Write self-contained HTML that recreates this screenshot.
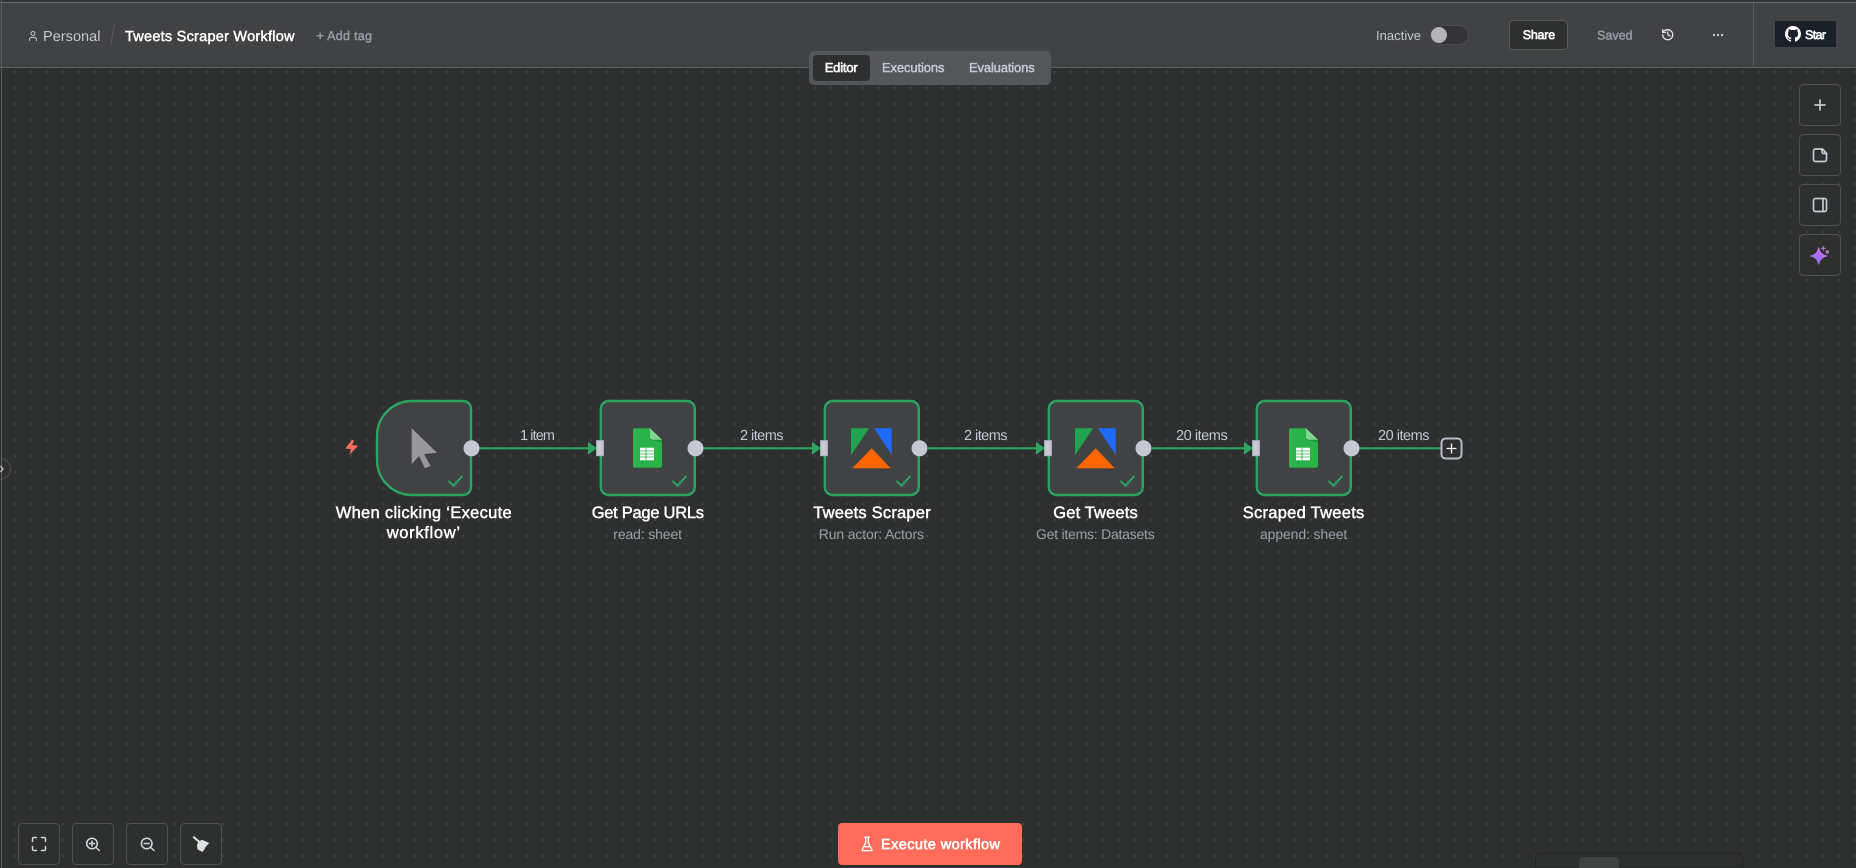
<!DOCTYPE html>
<html><head><meta charset="utf-8"><style>
html,body{margin:0;padding:0;background:#2e2f2f;width:1856px;height:868px;overflow:hidden}
svg{display:block}
text{font-family:"Liberation Sans",sans-serif;text-rendering:geometricPrecision}
.m{stroke-width:.45px}
.s{stroke-width:.6px}
.i{fill:none;stroke-linecap:round;stroke-linejoin:round}
</style></head><body>
<svg width="1856" height="868" viewBox="0 0 1856 868" xmlns="http://www.w3.org/2000/svg">
<defs>
<pattern id="dots" x="0" y="0" width="16" height="16" patternUnits="userSpaceOnUse"><rect x="14.250" y="7.250" width="1.500" height="1.500" fill="#525353"/></pattern>
<linearGradient id="spark" x1="0" y1="1" x2="1" y2="0"><stop offset="0" stop-color="#8a6cff"/><stop offset="1" stop-color="#cf72e8"/></linearGradient>
</defs>
<rect width="1856" height="868" fill="#2e2f2f"/>
<rect width="1856" height="868" fill="url(#dots)"/>

<!-- header -->
<rect x="0" y="0" width="1856" height="68" fill="#414244"/>
<rect x="0" y="0" width="1856" height="2" fill="#333435"/>
<rect x="0" y="2" width="1856" height="1" fill="#6a6b6d"/>
<rect x="0" y="67" width="1856" height="1" fill="#5e5f62"/>
<rect x="1" y="0" width="1" height="868" fill="#5b5c5d"/>
<rect x="1753" y="3" width="1" height="64" fill="#595a5d"/>

<g class="i" stroke="#c5c8d3" stroke-width="2" transform="translate(27,30) scale(.5)"><path d="M19 21v-2a4 4 0 0 0-4-4H9a4 4 0 0 0-4 4v2"/><circle cx="12" cy="7" r="4"/></g>
<text x="43" y="41" font-size="14.500" fill="#c5c8d3" textLength="57.500" lengthAdjust="spacing">Personal</text>
<path d="M114.500 29 L110.500 53" stroke="#58595c" stroke-width="1" fill="none" transform="translate(0,-2) scale(1,.9)"/>
<text x="125" y="41" font-size="14.500" fill="#fff" stroke="#fff" class="m" textLength="169.500" lengthAdjust="spacing">Tweets Scraper Workflow</text>
<text x="316.500" y="40" font-size="12.500" fill="#969aa3" stroke="#969aa3" class="m" textLength="55.500" lengthAdjust="spacing">+ Add tag</text>

<text x="1376" y="40" font-size="13" fill="#c5c8d3" textLength="45" lengthAdjust="spacing">Inactive</text>
<rect x="1430.500" y="25.500" width="38" height="19" rx="9.500" fill="#333435" stroke="#4b4c4e"/>
<circle cx="1439" cy="35" r="8" fill="#b5b5ba"/>
<rect x="1509.500" y="20.500" width="58" height="29" rx="4" fill="#2e2f2f" stroke="#58595b"/>
<text x="1522.700" y="39" font-size="12.500" fill="#fff" stroke="#fff" class="s" textLength="32.500" lengthAdjust="spacing">Share</text>
<text x="1597" y="39.500" font-size="12.500" fill="#969aa3" stroke="#969aa3" class="m" textLength="35.500" lengthAdjust="spacing">Saved</text>
<g class="i" stroke="#e4e5e8" stroke-width="2.300" transform="translate(1661,28) scale(.56)"><path d="M3 12a9 9 0 1 0 9-9 9.750 9.750 0 0 0-6.740 2.740L3 8"/><path d="M3 3v5h5"/><path d="M12 7v5l4 2"/></g>
<g fill="#d4d6dc"><circle cx="1714" cy="35" r="1.100"/><circle cx="1718" cy="35" r="1.100"/><circle cx="1722" cy="35" r="1.100"/></g>
<rect x="1775" y="21" width="61" height="26" rx="1" fill="#1a202a"/>
<path transform="translate(1785,26)" fill="#fff" d="M8 0C3.580 0 0 3.580 0 8c0 3.540 2.290 6.530 5.470 7.590.4.070.55-.17.55-.38 0-.19-.01-.82-.01-1.490-2.010.37-2.530-.49-2.690-.94-.09-.23-.48-.94-.82-1.130-.28-.15-.68-.52-.01-.53.63-.01 1.080.58 1.230.82.720 1.210 1.870.87 2.330.66.070-.52.280-.87.510-1.070-1.780-.2-3.640-.89-3.640-3.950 0-.87.310-1.590.82-2.150-.08-.2-.36-1.020.08-2.120 0 0 .67-.21 2.200.82.640-.18 1.320-.27 2-.27.68 0 1.360.09 2 .27 1.530-1.040 2.200-.82 2.200-.82.44 1.100.16 1.920.08 2.120.51.56.82 1.270.82 2.150 0 3.070-1.870 3.750-3.650 3.950.29.25.54.73.54 1.480 0 1.070-.01 1.930-.01 2.200 0 .21.15.46.55.38A8.013 8.013 0 0016 8c0-4.420-3.580-8-8-8z"/>
<text x="1805" y="39" font-size="12.500" fill="#fff" stroke="#fff" class="s" textLength="21" lengthAdjust="spacing">Star</text>

<!-- tabs -->
<rect x="809" y="51" width="242" height="34" rx="5" fill="#55565a"/>
<rect x="813" y="55" width="57" height="26" rx="4" fill="#2e2f2f"/>
<text x="824.700" y="72" font-size="13" fill="#fff" stroke="#fff" class="s" textLength="33" lengthAdjust="spacing">Editor</text>
<text x="882" y="72" font-size="13" fill="#c5c8d3" stroke="#c5c8d3" class="m" textLength="62.500" lengthAdjust="spacing">Executions</text>
<text x="969" y="72" font-size="13" fill="#c5c8d3" stroke="#c5c8d3" class="m" textLength="65.700" lengthAdjust="spacing">Evaluations</text>

<!-- right toolbar -->
<g fill="#2e2f2f" stroke="#4f5052">
<rect x="1799.500" y="84.500" width="41" height="41" rx="4"/>
<rect x="1799.500" y="134.500" width="41" height="41" rx="4"/>
<rect x="1799.500" y="184.500" width="41" height="41" rx="4"/>
<rect x="1799.500" y="234.500" width="41" height="41" rx="4"/>
</g>
<g class="i" stroke="#c5c8d3" stroke-width="1.700">
<path d="M1820 100v10M1815 105h10"/>
<path d="M1815.500 149h7l4 4.500v6a2 2 0 0 1-2 2h-9a2 2 0 0 1-2-2v-8.500a2 2 0 0 1 2-2z"/>
<path d="M1822 149.500v2.500a1.500 1.500 0 0 0 1.500 1.500h3"/>
<rect x="1813.500" y="198.500" width="13" height="13" rx="2"/>
<path d="M1823 198.500v13"/>
</g>
<path d="M1818.700 248 Q1819.800 254.700 1826.700 256 Q1819.800 257.300 1818.700 264 Q1817.600 257.300 1810.700 256 Q1817.600 254.700 1818.700 248z" fill="url(#spark)" stroke="url(#spark)" stroke-width="1.200" stroke-linejoin="round"/>
<path d="M1823.300 246v4.600M1821 248.300h4.600" stroke="#b77cf0" stroke-width="1.100" fill="none"/>
<circle cx="1827.300" cy="252" r="1.700" fill="#c873b4"/>

<!-- sidebar toggle -->
<circle cx="0" cy="469" r="10.500" fill="#2e2f2f" stroke="#4b4c4d"/>
<rect x="1" y="458" width="1" height="22" fill="#5b5c5d"/>
<path d="M.5 466l2.500 3-2.500 3" stroke="#c5c8d3" stroke-width="1.300" fill="none"/>

<!-- lines -->
<g stroke="#2ba561" stroke-width="2.200" fill="none">
<path d="M479 448.300H590"/><path d="M703 448.300H814"/><path d="M928 448.300H1038"/><path d="M1152 448.300H1246"/><path d="M1359 448.300H1441"/>
</g>
<g fill="#2ba561">
<path d="M588 441.800L597 448.300L588 454.800z"/><path d="M812 441.800L821 448.300L812 454.800z"/><path d="M1036 441.800L1045 448.300L1036 454.800z"/><path d="M1244 441.800L1253 448.300L1244 454.800z"/>
</g>

<!-- nodes -->
<g fill="#414244" stroke="#2ba561" stroke-width="2.400">
<path d="M412 401H463a8 8 0 0 1 8 8V487a8 8 0 0 1-8 8H412a35 35 0 0 1-35-35V436a35 35 0 0 1 35-35z"/>
<rect x="600.800" y="401" width="94" height="94" rx="8"/>
<rect x="824.800" y="401" width="94" height="94" rx="8"/>
<rect x="1048.800" y="401" width="94" height="94" rx="8"/>
<rect x="1256.800" y="401" width="94" height="94" rx="8"/>
</g>

<!-- cursor icon -->
<path d="M411.700 428.300L437 452.700L424 454L430.700 466L425 468.300L419 456L411.700 464.300z" fill="#98989c"/>
<!-- bolt -->
<path d="M351.700 440.300L345.300 448.500L351 449.300L349.300 455L358 445.800L352 445L354.300 440.300z" fill="#ff6d5a"/>

<!-- sheets icon 1 -->
<g>
<path d="M635 428.300H650L662 441.700V465.700a2 2 0 0 1-2 2H635a2 2 0 0 1-2-2V430.300a2 2 0 0 1 2-2z" fill="#2ab24b"/>
<path d="M650 439.500H662V442.800z" fill="#1f9a42"/>
<path d="M650 428.300L662 439.800H653a3 3 0 0 1-3-3z" fill="#80d690"/>
<rect x="640" y="447.700" width="14" height="12.600" fill="#fff"/>
<path d="M640 451h14M640 454h14M640 457h14M646 447.700v12.600" stroke="#2ab24b" stroke-width=".8"/>
</g>
<!-- sheets icon 2 -->
<g transform="translate(656,0)">
<path d="M635 428.300H650L662 441.700V465.700a2 2 0 0 1-2 2H635a2 2 0 0 1-2-2V430.300a2 2 0 0 1 2-2z" fill="#2ab24b"/>
<path d="M650 439.500H662V442.800z" fill="#1f9a42"/>
<path d="M650 428.300L662 439.800H653a3 3 0 0 1-3-3z" fill="#80d690"/>
<rect x="640" y="447.700" width="14" height="12.600" fill="#fff"/>
<path d="M640 451h14M640 454h14M640 457h14M646 447.700v12.600" stroke="#2ab24b" stroke-width=".8"/>
</g>
<!-- apify 1 -->
<g>
<path d="M851 428.300H869L851 455z" fill="#20a34e"/>
<path d="M874 428.300H891.700V455z" fill="#1f6bff"/>
<path d="M871.700 448.300L890.700 468.300H852.300z" fill="#ff6600"/>
</g>
<!-- apify 2 -->
<g transform="translate(224,0)">
<path d="M851 428.300H869L851 455z" fill="#20a34e"/>
<path d="M874 428.300H891.700V455z" fill="#1f6bff"/>
<path d="M871.700 448.300L890.700 468.300H852.300z" fill="#ff6600"/>
</g>

<!-- checks -->
<g stroke="#2ba561" stroke-width="2" fill="none">
<path d="M448.300 481L453.700 485.700L462.300 476"/>
<path d="M672.300 481L677.700 485.700L686.300 476"/>
<path d="M896.300 481L901.700 485.700L910.300 476"/>
<path d="M1120.300 481L1125.700 485.700L1134.300 476"/>
<path d="M1328.300 481L1333.700 485.700L1342.300 476"/>
</g>

<!-- ports -->
<g fill="#c5c8d3">
<circle cx="471.500" cy="448.300" r="8"/><circle cx="695.500" cy="448.300" r="8"/><circle cx="919.500" cy="448.300" r="8"/><circle cx="1143.500" cy="448.300" r="8"/><circle cx="1351.500" cy="448.300" r="8"/>
</g>
<g fill="#c5c8d3" stroke="#8e919a" stroke-width=".6">
<rect x="596.300" y="440.300" width="7.400" height="15.700"/><rect x="820.300" y="440.300" width="7.400" height="15.700"/><rect x="1044.300" y="440.300" width="7.400" height="15.700"/><rect x="1252.300" y="440.300" width="7.400" height="15.700"/>
</g>
<rect x="1441.500" y="438.500" width="20" height="20" rx="4" fill="#2e2f2f" stroke="#b9bcc6" stroke-width="2"/>
<path d="M1451.500 443.500v10M1446.500 448.500h10" stroke="#fff" stroke-width="1.300" fill="none"/>

<!-- edge labels -->
<g font-size="14.500" fill="#c5c8d3">
<text x="520" y="440" textLength="35" lengthAdjust="spacing">1 item</text>
<text x="740" y="440" textLength="43.500" lengthAdjust="spacing">2 items</text>
<text x="964" y="440" textLength="43.500" lengthAdjust="spacing">2 items</text>
<text x="1176" y="440" textLength="51.700" lengthAdjust="spacing">20 items</text>
<text x="1378" y="440" textLength="51.500" lengthAdjust="spacing">20 items</text>
</g>

<!-- node names -->
<g font-size="16.500" fill="#fff" stroke="#fff" class="m">
<text x="335.700" y="518" textLength="176" lengthAdjust="spacing">When clicking ‘Execute</text>
<text x="386.700" y="538" textLength="73.300" lengthAdjust="spacing">workflow’</text>
<text x="591.700" y="518" textLength="112.300" lengthAdjust="spacing">Get Page URLs</text>
<text x="813.300" y="518" textLength="117.400" lengthAdjust="spacing">Tweets Scraper</text>
<text x="1053.300" y="518" textLength="84.400" lengthAdjust="spacing">Get Tweets</text>
<text x="1242.700" y="518" textLength="121.600" lengthAdjust="spacing">Scraped Tweets</text>
</g>
<g font-size="14" fill="#9c9fa8">
<text x="613.300" y="539" textLength="68.700" lengthAdjust="spacing">read: sheet</text>
<text x="818.700" y="539" textLength="105.300" lengthAdjust="spacing">Run actor: Actors</text>
<text x="1036" y="539" textLength="118.700" lengthAdjust="spacing">Get items: Datasets</text>
<text x="1260" y="539" textLength="87.300" lengthAdjust="spacing">append: sheet</text>
</g>

<!-- bottom toolbar -->
<g fill="#2e2f2f" stroke="#4f5052">
<rect x="18.500" y="823.500" width="41" height="41" rx="4"/>
<rect x="72.500" y="823.500" width="41" height="41" rx="4"/>
<rect x="126.500" y="823.500" width="41" height="41" rx="4"/>
<rect x="180.500" y="823.500" width="41" height="41" rx="4"/>
</g>
<g class="i" stroke="#d3d5dc" stroke-width="1.500">
<path d="M32.500 841.500v-2.500a1.500 1.500 0 0 1 1.500-1.500h2.500M41.500 837.500h2.500a1.500 1.500 0 0 1 1.500 1.500v2.500M45.500 846.500v2.500a1.500 1.500 0 0 1-1.500 1.500h-2.500M36.500 850.500h-2.500a1.500 1.500 0 0 1-1.500-1.500v-2.500"/>
<circle cx="92" cy="843.500" r="5.300"/><path d="M96 847.500l3.300 3M92 841v5M89.500 843.500h5"/>
<circle cx="146.700" cy="843.500" r="5.300"/><path d="M150.700 847.500l3.300 3M144.200 843.500h5"/>
</g>
<path d="M193.300 836.800L199.700 842.300" stroke="#e2e4e8" stroke-width="2" fill="none"/>
<path d="M198.500 841.500L202 839.800L209.300 843L206 846.500L202.700 852L197.500 849.500L197 845z" fill="#dfe1e6"/>

<!-- execute -->
<rect x="838" y="823" width="184" height="42" rx="4" fill="#ff6d5a"/>
<g class="i" stroke="#fff" stroke-width="2" transform="translate(859,836) scale(.667)"><path d="M10 2v7.527a2 2 0 0 1-.211.896L4.720 20.550a1 1 0 0 0 .9 1.450h12.760a1 1 0 0 0 .9-1.450l-5.069-10.127A2 2 0 0 1 14 9.527V2"/><path d="M8.500 2h7"/><path d="M7 16h10"/></g>
<text x="881" y="849" font-size="14.500" fill="#fff" stroke="#fff" class="s" textLength="119" lengthAdjust="spacing">Execute workflow</text>

<!-- bottom panel -->
<path d="M1535.500 868V858a5 5 0 0 1 5-5H1738a5 5 0 0 1 5 5V868z" fill="#2d2e2e" stroke="#242525"/>
<path d="M1579 868V861a4 4 0 0 1 4-4H1615a4 4 0 0 1 4 4V868z" fill="#3f4040"/>
</svg>
</body></html>
